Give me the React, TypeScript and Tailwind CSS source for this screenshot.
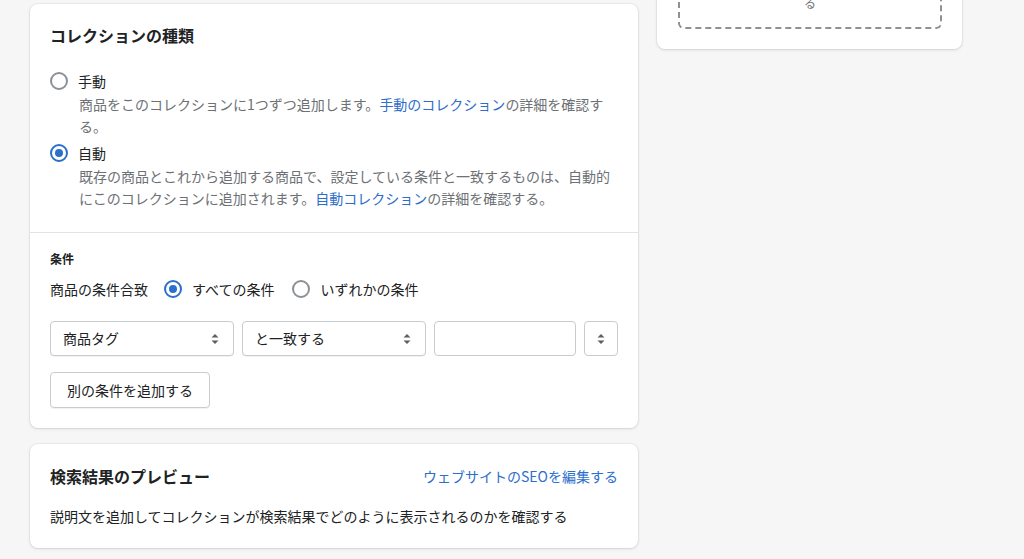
import React from "react";

const font = { fontFamily: '"Noto Sans CJK JP", "Noto Sans", sans-serif' };

const Radio = ({ checked }: { checked?: boolean }) =>
    checked ? (
        <span className="flex h-[18px] w-[18px] shrink-0 items-center justify-center rounded-full border-2 border-[#2c6ecb] bg-white">
            <span className="h-[8px] w-[8px] rounded-full bg-[#2c6ecb]" />
        </span>
    ) : (
        <span className="h-[18px] w-[18px] shrink-0 rounded-full border-2 border-[#8c9196] bg-white" />
    );

const Chevrons = () => (
    <svg width="10" height="14" viewBox="0 0 10 14" className="shrink-0">
        <path d="M5 2 L8.5 5.5 L1.5 5.5 Z" fill="#5c5f62" />
        <path d="M5 12 L8.5 8.5 L1.5 8.5 Z" fill="#5c5f62" />
    </svg>
);

const SelectBox = ({ label, width }: { label: string; width: string }) => (
    <div
        className={`flex h-[35px] ${width} items-center justify-between rounded-[4px] border border-[#c9cccf] bg-white pl-3 pr-[13px] text-[14px] text-[#202223] shadow-[0_1px_0_rgba(0,0,0,0.05)]`}
    >
        <span>{label}</span>
        <Chevrons />
    </div>
);

const cardClass =
    "rounded-[8px] bg-white shadow-[0_0_0_1px_rgba(63,63,68,0.05),0_1px_3px_0_rgba(63,63,68,0.15)]";

export default function App() {
    return (
        <div className="h-[559px] w-[1024px] overflow-hidden bg-[#f6f6f7]" style={font}>
            <div className="flex gap-[19px] pl-[30px]">
                {/* main column */}
                <div className="flex w-[608px] flex-col gap-4 pt-[4px]">
                    <div className={cardClass}>
                        <div className="px-5 pb-[23px] pt-[19px]">
                            <h2 className="text-[16px] font-bold leading-[24px] text-[#202223]">コレクションの種類</h2>

                            <div className="mt-[23px] flex items-center gap-[10px] text-[14px] leading-[22px] text-[#202223]">
                                <Radio />
                                <span>手動</span>
                            </div>
                            <p className="mt-[1px] pl-[29px] text-[14px] leading-[22px] text-[#6d7175]">
                                商品をこのコレクションに1つずつ追加します。
                                <span className="text-[#2c6ecb]">手動のコレクション</span>の詳細を確認する。
                            </p>

                            <div className="mt-[5px] flex items-center gap-[10px] text-[14px] leading-[22px] text-[#202223]">
                                <Radio checked />
                                <span>自動</span>
                            </div>
                            <p className="mt-[1px] pl-[29px] text-[14px] leading-[22px] text-[#6d7175]">
                                既存の商品とこれから追加する商品で、設定している条件と一致するものは、自動的にこのコレクションに追加されます。
                                <span className="text-[#2c6ecb]">自動コレクション</span>の詳細を確認する。
                            </p>
                        </div>

                        <div className="border-t border-[#e1e3e5] px-5 pb-5 pt-[18px]">
                            <h3 className="text-[12px] font-bold leading-[16px] text-[#202223]">条件</h3>

                            <div className="mt-[12px] flex items-center text-[14px] leading-[20px] text-[#202223]">
                                <span>商品の条件合致</span>
                                <span className="ml-4 flex items-center gap-[10px]">
                                    <Radio checked />
                                    すべての条件
                                </span>
                                <span className="ml-[18px] flex items-center gap-[10px]">
                                    <Radio />
                                    いずれかの条件
                                </span>
                            </div>

                            <div className="mt-[22px] flex gap-2">
                                <SelectBox label="商品タグ" width="w-[184px]" />
                                <SelectBox label="と一致する" width="w-[184px]" />
                                <div className="h-[35px] w-[142px] rounded-[4px] border border-[#c9cccf] bg-white" />
                                <div className="flex h-[35px] w-[34px] items-center justify-center rounded-[4px] border border-[#c9cccf] bg-white">
                                    <Chevrons />
                                </div>
                            </div>

                            <button className="mt-4 h-[36px] rounded-[4px] border border-[#c9cccf] bg-white px-4 text-[14px] text-[#202223] shadow-[0_1px_0_rgba(0,0,0,0.05)]">
                                別の条件を追加する
                            </button>
                        </div>
                    </div>

                    <div className={`${cardClass} px-5 pb-[22px] pt-5`}>
                        <div className="flex items-center justify-between">
                            <h2 className="text-[16px] font-bold leading-[24px] text-[#202223]">検索結果のプレビュー</h2>
                            <span className="text-[14px] text-[#2c6ecb]">ウェブサイトのSEOを編集する</span>
                        </div>
                        <p className="mt-[18px] text-[14px] leading-[20px] text-[#202223]">
                            説明文を追加してコレクションが検索結果でどのように表示されるのかを確認する
                        </p>
                    </div>
                </div>

                {/* side column */}
                <div className="w-[305px]">
                    <div className={`${cardClass} -mt-[121px] pb-5 pl-[21px] pr-5 pt-5`}>
                        <div className="flex h-[130px] flex-col items-center justify-end rounded-[6px] border-2 border-dashed border-[#8c9196] pb-[14px] text-center text-[12px] leading-[20px] text-[#6d7175]">
                            <span>画像をドロップするか、画像を追加す</span>
                            <span>る</span>
                        </div>
                    </div>
                </div>
            </div>
        </div>
    );
}
